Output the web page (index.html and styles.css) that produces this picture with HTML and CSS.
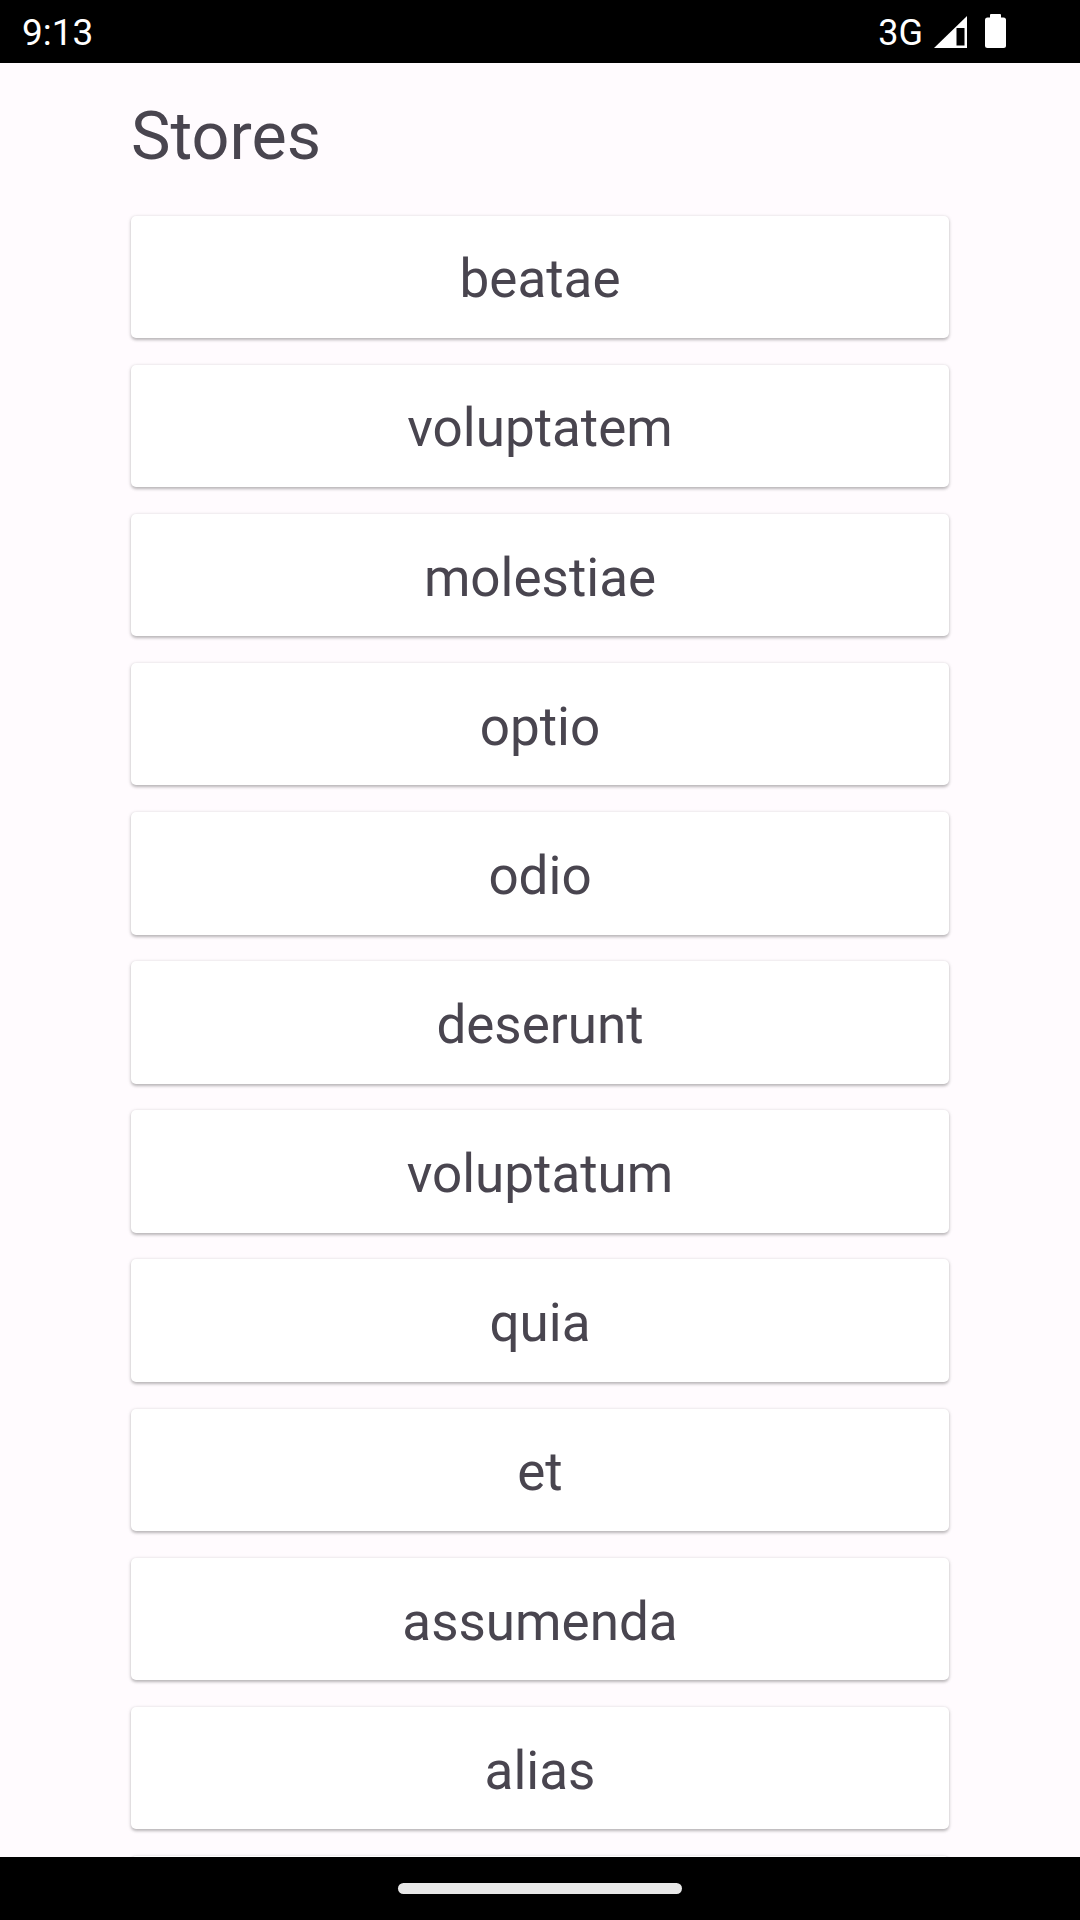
FILE: index.html
```html
<!DOCTYPE html>
<html>
<head>
<meta charset="utf-8">
<link rel="stylesheet" href="styles.css">
</head>
<body>
<div class="screen">
  <div class="status-bar">
    <span class="time">9:13</span>
    <div class="status-icons">
      <span class="net">3G</span>
      <svg class="signal" width="34" height="32" viewBox="0 0 34 32">
        <path d="M0 32 L33 0 L33 32 Z" fill="#fff"/>
        <rect x="22.5" y="12" width="8" height="17.5" fill="#000"/>
      </svg>
      <svg class="battery" width="21" height="34" viewBox="0 0 21 34">
        <rect x="5" y="0" width="11" height="5" rx="1" fill="#fff"/>
        <rect x="0" y="3.5" width="21" height="30.5" rx="2.5" fill="#fff"/>
      </svg>
    </div>
  </div>
  <main class="content">
    <h1 class="title">Stores</h1>
    <ul class="store-list">
      <li class="store-card">beatae</li>
      <li class="store-card">voluptatem</li>
      <li class="store-card">molestiae</li>
      <li class="store-card">optio</li>
      <li class="store-card">odio</li>
      <li class="store-card">deserunt</li>
      <li class="store-card">voluptatum</li>
      <li class="store-card">quia</li>
      <li class="store-card">et</li>
      <li class="store-card">assumenda</li>
      <li class="store-card">alias</li>
      <li class="store-card"></li>
    </ul>
  </main>
  <div class="nav-bar"><div class="handle"></div></div>
</div>
</body>
</html>
```
FILE: styles.css
```css
* { box-sizing: border-box; }
html, body {
  margin: 0;
  padding: 0;
  background: #fffbfe;
}
body {
  font-family: Roboto, "Noto Sans", sans-serif;
  width: 1080px;
  height: 1920px;
  overflow: hidden;
}
.screen {
  position: relative;
  width: 1080px;
  height: 1920px;
  overflow: hidden;
  background: #fffbfe;
}
.status-bar {
  height: 63px;
  background: #000;
  color: #fff;
  display: flex;
  align-items: center;
  justify-content: space-between;
  padding: 0 74px 0 22px;
}
.time {
  font-size: 37px;
  line-height: 1;
  padding-top: 2px;
}
.status-icons {
  display: flex;
  align-items: center;
}
.net {
  font-size: 36px;
  line-height: 1;
  padding-top: 2px;
  margin-right: 11px;
}
.signal {
  display: block;
  margin-right: 17px;
}
.battery {
  display: block;
  margin-top: -2px;
}
.content {
  padding: 35px 131px 0 131px;
}
.title {
  margin: 0 0 40.5px 0;
  font-weight: 400;
  font-size: 66.5px;
  line-height: 77px;
  color: #49454f;
  letter-spacing: 0;
}
.store-list {
  list-style: none;
  margin: 0;
  padding: 0;
  display: flex;
  flex-direction: column;
  gap: 26.65px;
}
.store-card {
  height: 122.5px;
  background: #fff;
  border-radius: 5px;
  box-shadow: 0 1.5px 3px rgba(0,0,0,0.24), 0 1px 5px rgba(0,0,0,0.08);
  display: flex;
  align-items: center;
  justify-content: center;
  padding-top: 5px;
  font-size: 53px;
  line-height: 62px;
  color: #49454f;
}
.nav-bar {
  position: absolute;
  left: 0;
  right: 0;
  bottom: 0;
  height: 63px;
  background: #000;
  display: flex;
  justify-content: center;
  padding-top: 26px;
}
.handle {
  width: 284px;
  height: 11px;
  border-radius: 6px;
  background: #e8e8e8;
}
```
